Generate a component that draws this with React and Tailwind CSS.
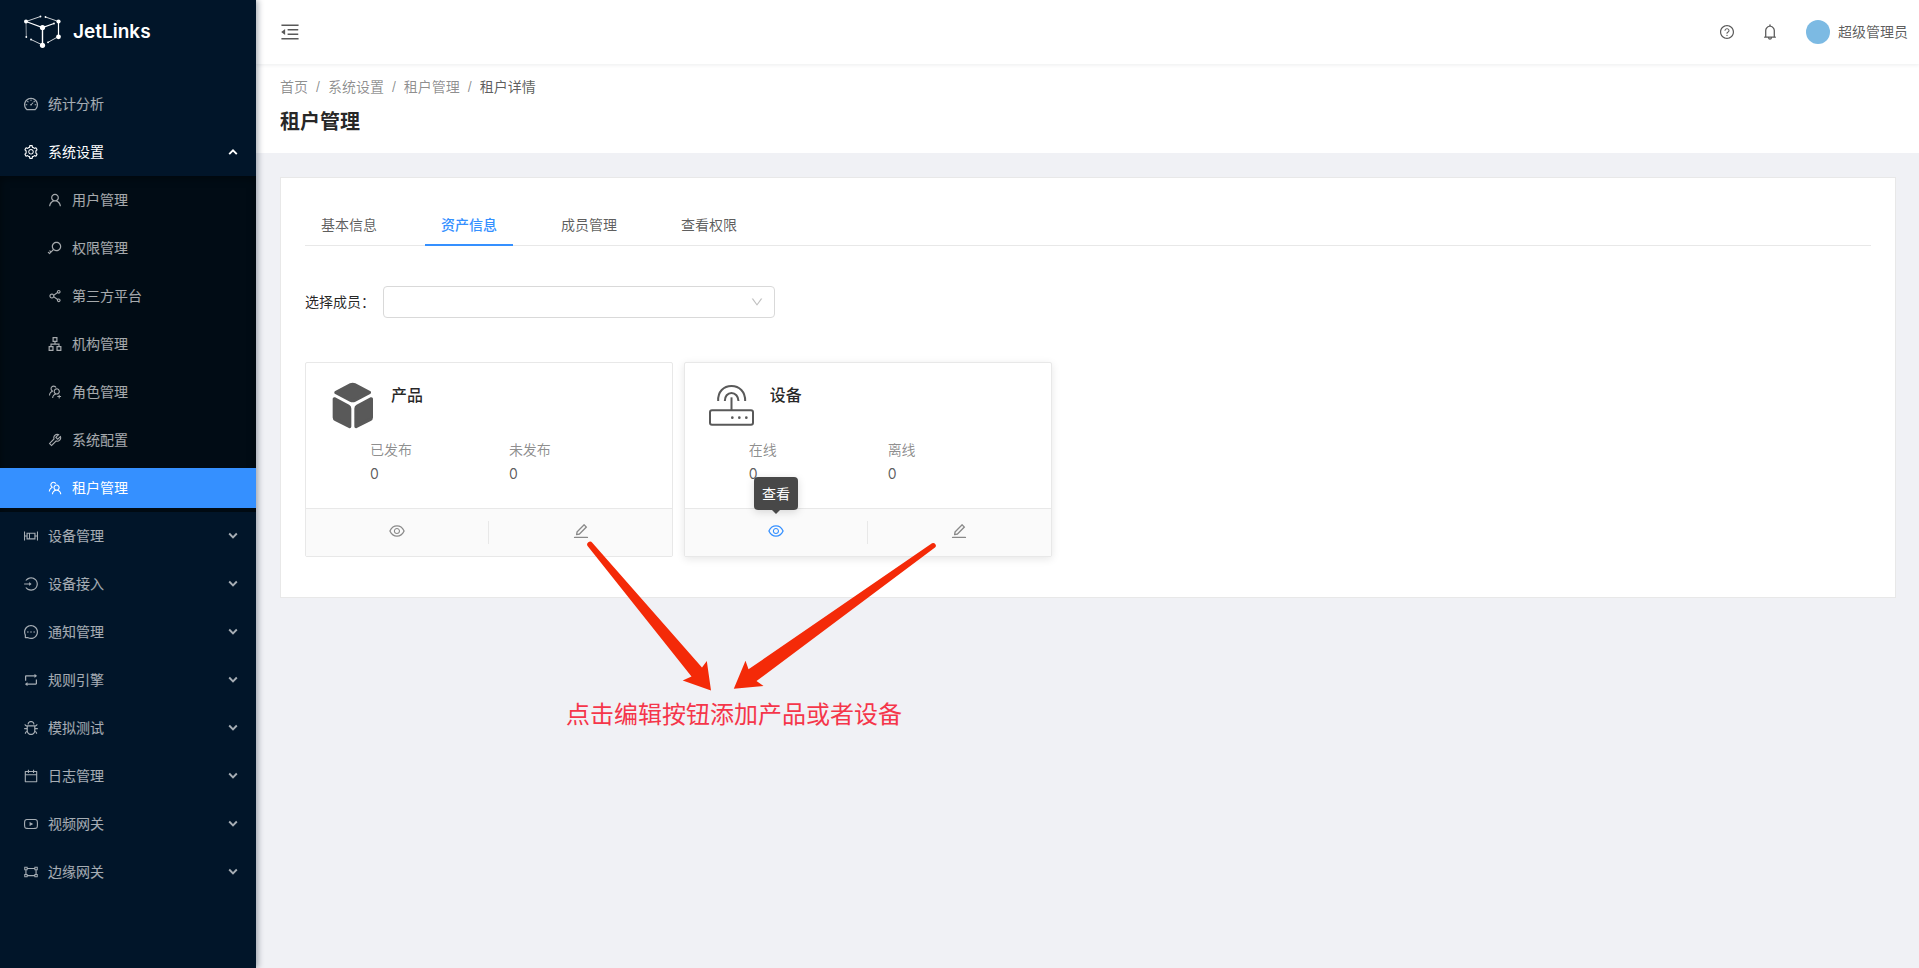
import React, { useState } from 'react';
import {
  AiOutlineDashboard, AiOutlineSetting, AiOutlineUser, AiOutlineKey, AiOutlineShareAlt,
  AiOutlineApartment, AiOutlineUsergroupAdd, AiOutlineTool, AiOutlineTeam, AiOutlineBoxPlot,
  AiOutlineLogin, AiOutlineMessage, AiOutlineRetweet, AiOutlineBug, AiOutlineCalendar,
  AiOutlineYoutube, AiOutlineGateway, AiOutlineMenuFold, AiOutlineQuestionCircle,
  AiOutlineBell, AiOutlineEye, AiOutlineEdit, AiOutlineDown,
} from 'react-icons/ai';

const menus = [
  { name: '统计分析', icon: AiOutlineDashboard },
  {
    name: '系统设置',
    icon: AiOutlineSetting,
    open: true,
    children: [
      { name: '用户管理', icon: AiOutlineUser },
      { name: '权限管理', icon: AiOutlineKey },
      { name: '第三方平台', icon: AiOutlineShareAlt },
      { name: '机构管理', icon: AiOutlineApartment },
      { name: '角色管理', icon: AiOutlineUsergroupAdd },
      { name: '系统配置', icon: AiOutlineTool },
      { name: '租户管理', icon: AiOutlineTeam, active: true },
    ],
  },
  { name: '设备管理', icon: AiOutlineBoxPlot, children: [] },
  { name: '设备接入', icon: AiOutlineLogin, children: [] },
  { name: '通知管理', icon: AiOutlineMessage, children: [] },
  { name: '规则引擎', icon: AiOutlineRetweet, children: [] },
  { name: '模拟测试', icon: AiOutlineBug, children: [] },
  { name: '日志管理', icon: AiOutlineCalendar, children: [] },
  { name: '视频网关', icon: AiOutlineYoutube, children: [] },
  { name: '边缘网关', icon: AiOutlineGateway, children: [] },
];

const tabs = ['基本信息', '资产信息', '成员管理', '查看权限'];

const Logo = () => (
  <svg className="h-[34px] w-[38px]" viewBox="24 15 38 34" fill="none" stroke="#fff" aria-hidden="true">
    <path d="M26 21.5 40.5 16.5M45.5 17 58.5 21.5M31 39.5 42.5 45M48 42.3 58.5 36.5" strokeWidth="0.8" />
    <path d="M26 21.5 42.5 27.5 54 23.5M58.5 21.5V36.5" strokeWidth="1.2" />
    <path d="M42.5 27.5V45" strokeWidth="1.4" />
    <path d="M26 21.5 26.3 37" strokeWidth="0.9" opacity="0.6" />
    <g fill="#fff" stroke="none">
      <circle cx="26" cy="21.5" r="2" />
      <circle cx="42.5" cy="27.5" r="2.6" />
      <circle cx="58.5" cy="21.5" r="2.1" />
      <circle cx="58.5" cy="36.8" r="2.4" />
      <circle cx="42.5" cy="45.3" r="2.6" />
      <circle cx="40.5" cy="16.5" r="0.9" />
      <circle cx="45.5" cy="17" r="0.9" />
      <circle cx="26.3" cy="37" r="0.9" />
      <circle cx="31" cy="39.5" r="0.9" />
      <circle cx="48" cy="42.3" r="0.9" />
      <circle cx="54" cy="23.5" r="0.9" />
    </g>
  </svg>
);

const Arrow = ({ up }) => (
  <svg className="h-2 w-2.5" viewBox="0 0 10 8" fill="none" stroke="currentColor" strokeWidth="1.9" aria-hidden="true">
    <path d={up ? 'M1.2 6.2 5 2.4 8.8 6.2' : 'M1.2 1.5 5 5.3 8.8 1.5'} />
  </svg>
);

const ProductIcon = () => (
  <svg className="h-[47px] w-[42px]" viewBox="110 97 126 140" fill="#595959" stroke="#595959" strokeWidth="10" strokeLinejoin="round" aria-hidden="true">
    <path d="M122 128 166 105Q172 102 178 105L222 128 178 151Q172 154 166 151Z" />
    <path d="M117 147 159 169Q163 171 163 176V230L121 209Q117 207 117 203Z" />
    <path d="M228 147 186 169Q182 171 182 176V230L224 209Q228 207 228 203Z" />
  </svg>
);

const DeviceIcon = () => (
  <svg className="h-[41px] w-[45px]" viewBox="117 105 135 123" fill="none" stroke="#595959" strokeWidth="6" aria-hidden="true">
    <rect x="120" y="181" width="129" height="43" rx="6" />
    <path d="M184.5 181V142" />
    <path d="M144.5 153C143 125 161 108 184.5 108S226 125 225.5 153" />
    <path d="M164.5 153C164 139 173 129 184.5 129S205 139 205.5 153" />
    <g fill="#595959" stroke="none">
      <circle cx="187" cy="203" r="4" />
      <circle cx="208" cy="203" r="4" />
      <circle cx="229" cy="203" r="4" />
    </g>
  </svg>
);

const MenuItem = ({ item }) => {
  const Icon = item.icon;
  return (
    <li>
      <div className="py-1">
        <a
          href="#"
          className={`flex h-10 items-center gap-2 pl-[23px] pr-[18px] ${item.open ? 'text-white' : 'text-white/65'}`}
        >
          <Icon className="size-4" />
          <span className="flex-1 pl-px">{item.name}</span>
          {item.children && <Arrow up={item.open} />}
        </a>
      </div>
      {item.open && (
        <ul className="flex flex-col gap-2 bg-[#010c15] py-1 shadow-[inset_0_2px_8px_rgba(0,0,0,0.45)]">
          {item.children.map(child => (
            <li key={child.name}>
              <a
                href="#"
                className={`flex h-10 items-center gap-2 pl-[47px] ${child.active ? 'bg-[#3590ff] text-white' : 'text-white/65'}`}
              >
                <child.icon className="size-4" />
                <span className="pl-px">{child.name}</span>
              </a>
            </li>
          ))}
        </ul>
      )}
    </li>
  );
};

const AssetCard = ({ title, icon, stats, hovered }) => (
  <section className={`rounded-xs border border-[#e8e8e8] bg-white ${hovered ? 'shadow-[0_2px_8px_rgba(0,0,0,0.1)]' : ''}`}>
    <div className="px-6 pb-[22px] pt-5">
      <div className="flex gap-4">
        <div className="flex size-[45px] items-center justify-center">{icon}</div>
        <h2 className="text-base font-medium leading-6 text-black/85">{title}</h2>
      </div>
      <dl className="ml-10 mt-2.5 grid grid-cols-2 leading-6">
        {stats.map(stat => (
          <div key={stat.label}>
            <dt className="text-black/45">{stat.label}</dt>
            <dd className="text-black/65">{stat.value}</dd>
          </div>
        ))}
      </dl>
    </div>
    <div className="flex border-t border-[#e8e8e8] bg-[#fafafa] py-3 text-black/45">
      <div className="flex h-[23px] flex-1 items-start justify-center border-r border-[#e8e8e8]">
        <button aria-label="查看" className={`relative flex h-5 items-center ${hovered ? 'text-[#3590ff]' : ''}`}>
          <AiOutlineEye className="size-[18px]" />
          {hovered && (
            <span className="absolute bottom-full left-1/2 mb-[11px] -translate-x-1/2 whitespace-nowrap rounded bg-[#484848] px-2 py-[5px] leading-[23px] text-white shadow-[0_2px_8px_rgba(0,0,0,0.15)]">
              查看
              <svg className="absolute left-1/2 top-full h-1 w-2 -translate-x-1/2" viewBox="0 0 8 4" fill="#484848" aria-hidden="true">
                <path d="M0 0H8L4 4Z" />
              </svg>
            </span>
          )}
        </button>
      </div>
      <div className="flex h-[23px] flex-1 items-start justify-center">
        <button aria-label="编辑" className="flex h-5 items-center">
          <AiOutlineEdit className="size-[18px]" />
        </button>
      </div>
    </div>
  </section>
);

const App = () => {
  const [tab, setTab] = useState('资产信息');

  return (
    <div className="flex min-h-screen bg-[#f0f1f5] font-[Inter,'Noto_Sans_CJK_SC',sans-serif] text-sm leading-[22px]">
      <aside className="z-10 w-64 shrink-0 bg-[#011529] shadow-[2px_0_6px_rgba(0,21,41,0.35)]">
        <a href="#" className="flex h-16 items-center gap-[11px] pl-6 text-[19px] font-semibold text-white">
          <Logo />
          <span>JetLinks</span>
        </a>
        <nav className="pt-4">
          <ul>
            {menus.map(item => <MenuItem key={item.name} item={item} />)}
          </ul>
        </nav>
      </aside>

      <div className="relative min-w-0 flex-1">
        <header className="relative flex h-16 items-center justify-between bg-white pl-[23px] pr-[11px] text-black/65 shadow-[0_1px_4px_rgba(0,21,41,0.08)]">
          <button aria-label="收起菜单">
            <AiOutlineMenuFold className="size-[22px]" />
          </button>
          <div className="flex items-center">
            <button aria-label="帮助" className="mr-[26px]">
              <AiOutlineQuestionCircle className="size-4" />
            </button>
            <button aria-label="通知" className="mr-[27px]">
              <AiOutlineBell className="size-[18px]" />
            </button>
            <a href="#" className="flex items-center gap-2">
              <span className="size-6 rounded-full bg-[#7cbae3]" />
              <span>超级管理员</span>
            </a>
          </div>
        </header>

        <div className="bg-white px-6 pb-[15px] pt-3">
          <nav className="flex gap-2 font-['Liberation_Sans','Noto_Sans_CJK_SC',sans-serif] text-black/45">
            <a href="#">首页</a>
            <span>/</span>
            <a href="#">系统设置</a>
            <span>/</span>
            <a href="#">租户管理</a>
            <span>/</span>
            <span className="text-black/65">租户详情</span>
          </nav>
          <h1 className="mt-2 text-xl font-semibold leading-8 text-black/85">租户管理</h1>
        </div>

        <main className="py-6 pl-6 pr-[23px]">
          <div className="border border-[#e8e8e8] bg-white px-6 pb-10 pt-6">
            <div role="tablist" className="flex gap-8 border-b border-[#e8e8e8]">
              {tabs.map(name => (
                <button
                  key={name}
                  role="tab"
                  aria-selected={tab === name}
                  onClick={() => setTab(name)}
                  className={`-mb-px h-11 border-b-2 px-4 pt-1 ${
                    tab === name ? 'border-[#3590ff] font-medium text-[#3590ff]' : 'border-transparent text-black/65'
                  }`}
                >
                  {name}
                </button>
              ))}
            </div>

            <div className="mt-10 flex items-center">
              <label htmlFor="member" className="w-[78px] text-black/85">选择成员：</label>
              <div className="relative w-1/4">
                <select id="member" className="h-8 w-full appearance-none rounded border border-[#d9d9d9] bg-white px-3" />
                <AiOutlineDown className="pointer-events-none absolute right-[11px] top-[9px] size-[14px] text-black/25" />
              </div>
            </div>

            <div className="mt-11 grid grid-cols-4 gap-[11px] pr-[62px]">
              <AssetCard
                title="产品"
                icon={<ProductIcon />}
                stats={[{ label: '已发布', value: 0 }, { label: '未发布', value: 0 }]}
              />
              <AssetCard
                title="设备"
                icon={<DeviceIcon />}
                stats={[{ label: '在线', value: 0 }, { label: '离线', value: 0 }]}
                hovered
              />
            </div>
          </div>
        </main>

        {/* Guide arrows from both edit buttons down to the hint */}
        <svg className="pointer-events-none absolute left-[324px] top-[530px] h-[170px] w-[370px]" viewBox="580 530 370 170" fill="#f42a08" aria-hidden="true">
          <path d="M592.3 542.7 702 667.5 706.8 661 711 690.5 682.7 680.5 691.5 676.5 587.8 546.2A2.8 2.8 0 0 1 592.3 542.7Z" />
          <path d="M932 543.2 748.5 669.3 745.5 660.8 733.8 688.8 763.5 686 756.5 681 935 547.6A2.7 2.7 0 0 0 932 543.2Z" />
        </svg>
        <p className="absolute left-[310px] top-[697px] whitespace-nowrap text-2xl leading-9 text-[#f5364a]">
          点击编辑按钮添加产品或者设备
        </p>
      </div>
    </div>
  );
};

export default App;
